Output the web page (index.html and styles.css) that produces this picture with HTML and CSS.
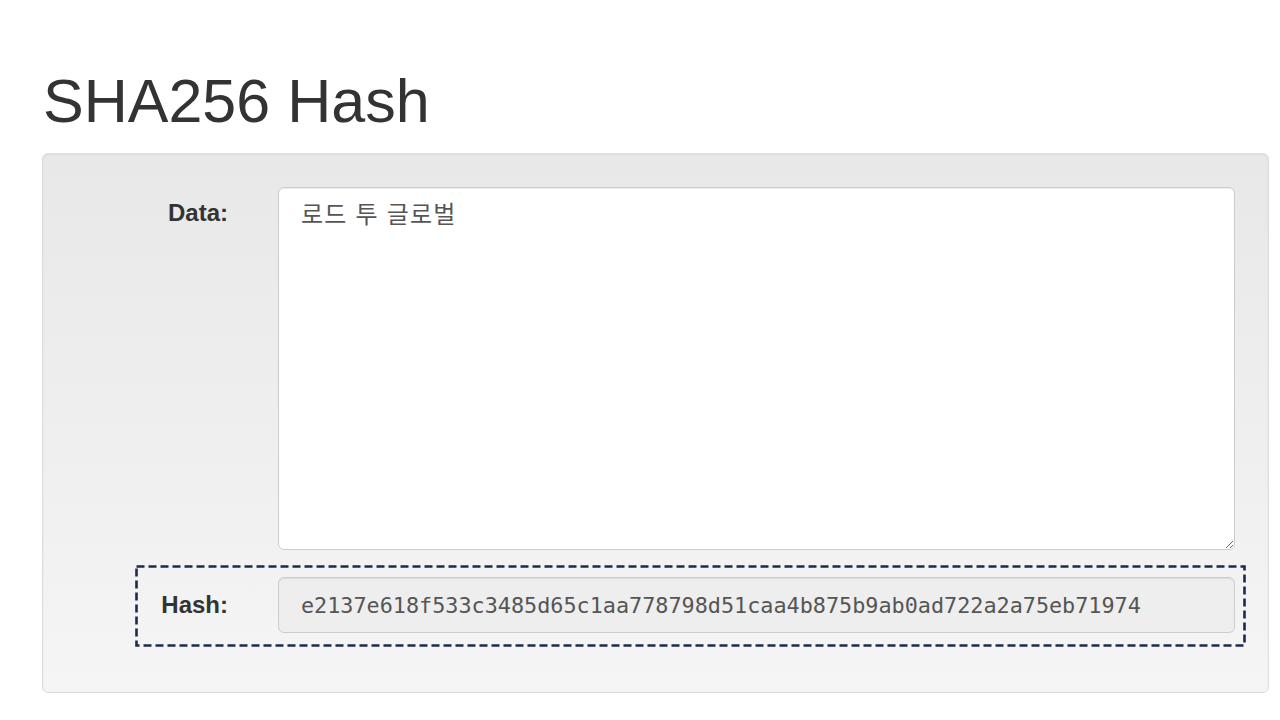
FILE: index.html
```html
<!DOCTYPE html>
<html lang="ko">
<head>
<meta charset="utf-8">
<title>SHA256 Hash</title>
<link rel="stylesheet" href="styles.css">
</head>
<body>
<main class="page">
  <h1 class="title">SHA256 Hash</h1>
  <section class="well">
    <div class="row row-data">
      <label class="label" for="data">Data:</label>
      <textarea id="data" class="field textarea">로드 투 글로벌</textarea>
    </div>
    <div class="row row-hash">
      <label class="label" for="hash">Hash:</label>
      <input id="hash" class="field hash" type="text" readonly value="e2137e618f533c3485d65c1aa778798d51caa4b875b9ab0ad722a2a75eb71974">
      <svg class="annot" preserveAspectRatio="none" aria-hidden="true"><rect x="1.5" y="1.5" width="calc(100% - 3px)" height="calc(100% - 3px)" fill="none" stroke="#1c2b4d" stroke-width="2.6" stroke-dasharray="8 4"/></svg>
    </div>
  </section>
</main>
</body>
</html>
```

FILE: styles.css
```css
html, body {
  margin: 0;
  padding: 0;
  background: #ffffff;
}

.page {
  padding: 66px 11px 0 42px;
  font-family: "Liberation Sans", Arial, sans-serif;
  color: #333333;
}

.title {
  margin: 0 0 17px 1px;
  font-size: 61px;
  font-weight: 400;
  line-height: 70px;
  color: #333333;
}

.well {
  background: linear-gradient(to bottom, #e8e8e8 0%, #f5f5f5 100%);
  border: 1px solid #dcdcdc;
  border-radius: 6px;
  box-shadow: inset 0 1px 3px rgba(0, 0, 0, 0.05);
  padding: 33px 33px 59px 0;
  display: flex;
  flex-direction: column;
  gap: 27px;
}

.row {
  display: grid;
  grid-template-columns: 185px 1fr;
  column-gap: 50px;
}

.row-data {
  align-items: start;
}

.row-hash {
  align-items: center;
  position: relative;
}

.label {
  text-align: right;
  font-weight: 700;
  font-size: 24px;
  line-height: 32px;
  color: #333333;
}

.row-data .label {
  padding-top: 10px;
}

.row-hash .label {
  padding-top: 0;
}

.field {
  box-sizing: border-box;
  width: 100%;
  margin: 0;
  border: 1px solid #cccccc;
  border-radius: 6px;
  box-shadow: inset 0 1px 1px rgba(0, 0, 0, 0.075);
  color: #555555;
  outline: none;
}

.textarea {
  height: 363px;
  padding: 9px 22px;
  background: #ffffff;
  font-family: "Noto Sans CJK KR", "Noto Sans", sans-serif;
  font-size: 24px;
  letter-spacing: 1.2px;
  line-height: 32px;
  resize: vertical;
}

.hash {
  height: 56px;
  padding: 0 22px;
  background: #eeeeee;
  font-family: "DejaVu Sans Mono", "Liberation Mono", monospace;
  font-size: 21.8px;
  color: #555555;
}

.annot {
  position: absolute;
  left: 92px;
  top: -12px;
  width: calc(100% - 81px);
  height: calc(100% + 26px);
  pointer-events: none;
}
```
